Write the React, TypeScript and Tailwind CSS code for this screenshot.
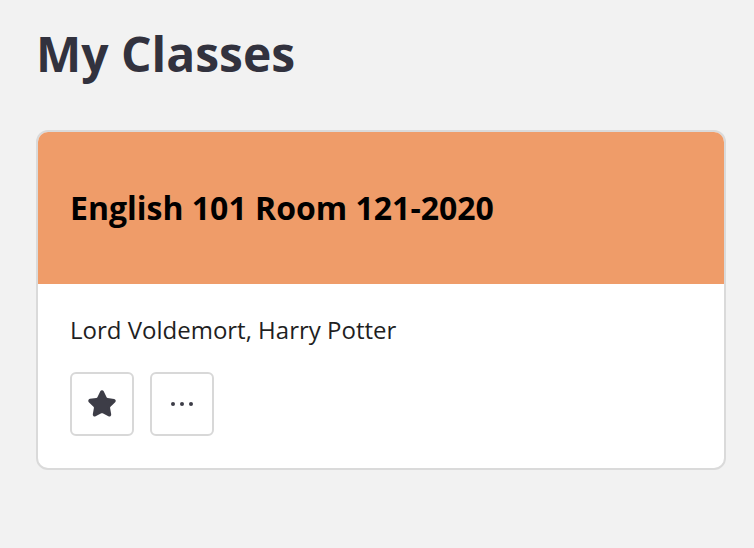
import { Star } from "lucide-react";

export default function App() {
  return (
    <div
      className="min-h-[548px] bg-[#f2f2f2] px-9 pt-6"
      style={{ fontFamily: '"Open Sans", sans-serif' }}
    >
      <h1 className="text-[48px] font-bold leading-[60px] text-[#32323e]">My Classes</h1>

      <div className="mt-[46px] w-[690px] overflow-hidden rounded-xl border-2 border-[#dadada] bg-white">
        <div className="flex h-[152px] items-center bg-[#ef9c69] px-8">
          <h2 className="text-[32px] font-bold text-black">English 101 Room 121-2020</h2>
        </div>

        <div className="px-8 pb-8 pt-[30px]">
          <p className="text-[24px] leading-8 text-[#1f1f1f]">Lord Voldemort, Harry Potter</p>

          <div className="mt-[26px] flex gap-4">
            <button className="flex h-16 w-16 items-center justify-center rounded-md border-2 border-[#d8d8d8] bg-white">
              <Star size={30} className="fill-[#3d3d47] text-[#3d3d47]" strokeLinejoin="round" />
            </button>
            <button className="flex h-16 w-16 items-center justify-center rounded-md border-2 border-[#d8d8d8] bg-white">
              <span className="flex gap-[5px]">
                <span className="h-[4px] w-[4px] rounded-full bg-[#3d3d47]" />
                <span className="h-[4px] w-[4px] rounded-full bg-[#3d3d47]" />
                <span className="h-[4px] w-[4px] rounded-full bg-[#3d3d47]" />
              </span>
            </button>
          </div>
        </div>
      </div>
    </div>
  );
}
